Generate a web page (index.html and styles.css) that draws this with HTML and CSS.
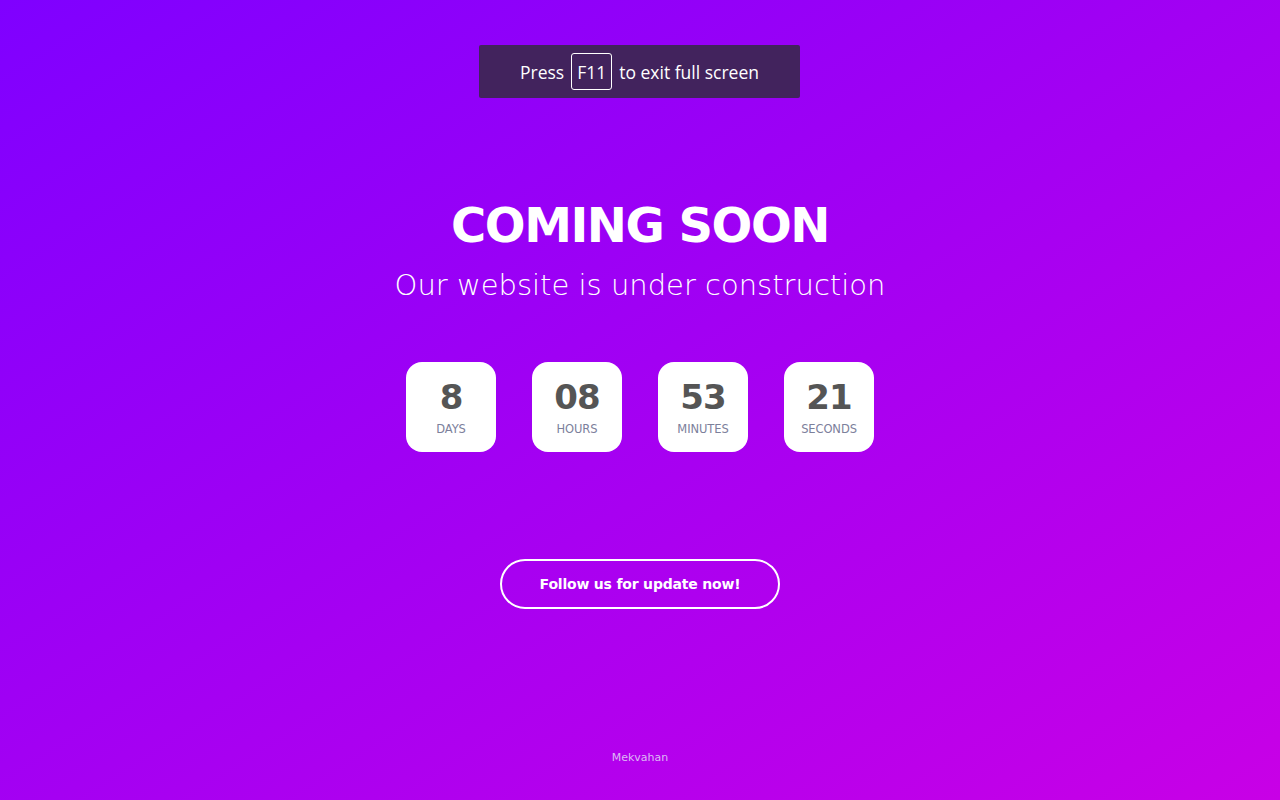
FILE: index.html
```html
<!DOCTYPE html>
<html lang="en">
<head>
<meta charset="utf-8">
<title>Coming Soon</title>
<link rel="stylesheet" href="styles.css">
</head>
<body>
<div class="page">
  <main class="content">
    <h1 class="title">COMING SOON</h1>
    <p class="subtitle">Our website is under construction</p>
    <div class="countdown">
      <div class="unit"><span class="num">8</span><span class="label">DAYS</span></div>
      <div class="unit"><span class="num">08</span><span class="label">HOURS</span></div>
      <div class="unit"><span class="num">53</span><span class="label">MINUTES</span></div>
      <div class="unit"><span class="num">21</span><span class="label">SECONDS</span></div>
    </div>
    <a class="follow" href="#">Follow us for update now!</a>
  </main>
  <footer class="footer">Mekvahan</footer>
</div>
<div class="fs-toast">Press <span class="key">F11</span> to exit full screen</div>
</body>
</html>
```
FILE: styles.css
```css
html, body {
  margin: 0;
  padding: 0;
  height: 100%;
}
body {
  background: linear-gradient(to bottom right, #7f00ff, #c800e6);
  font-family: "DejaVu Sans", "Open Sans", sans-serif;
  color: #fff;
}
.page {
  height: 100%;
  display: flex;
  flex-direction: column;
  align-items: center;
}
.content {
  flex: 1;
  display: flex;
  flex-direction: column;
  align-items: center;
  padding-top: 198px;
}
.title {
  margin: 0;
  font-size: 48px;
  line-height: 54px;
  font-weight: 800;
  letter-spacing: -1.5px;
}
.subtitle {
  margin: 13px 0 0;
  font-size: 29px;
  line-height: 40px;
  font-weight: 200;
  letter-spacing: 0;
}
.countdown {
  display: flex;
  gap: 36px;
  margin-top: 57px;
}
.unit {
  width: 90px;
  height: 90px;
  background: #fff;
  border-radius: 16px;
  display: flex;
  flex-direction: column;
  align-items: center;
  justify-content: center;
}
.num {
  font-size: 34px;
  line-height: 38px;
  font-weight: 700;
  color: #555555;
  letter-spacing: -1px;
}
.label {
  font-size: 11.5px;
  line-height: 14px;
  color: #7c809b;
  margin-top: 6px;
  letter-spacing: -0.1px;
}
.follow {
  margin-top: 107px;
  width: 276px;
  height: 46px;
  border: 2px solid #fff;
  border-radius: 26px;
  display: flex;
  align-items: center;
  justify-content: center;
  color: #fff;
  text-decoration: none;
  font-weight: 700;
  font-size: 14px;
  letter-spacing: -0.2px;
}
.footer {
  font-size: 11px;
  color: #dcb8f5;
  padding-bottom: 36px;
}
.fs-toast {
  position: absolute;
  top: 45px;
  left: 479px;
  width: 321px;
  height: 53px;
  box-sizing: border-box;
  background: #42235d;
  border-radius: 2px;
  display: flex;
  align-items: center;
  justify-content: center;
  gap: 7px;
  font-family: "Open Sans", "DejaVu Sans", sans-serif;
  font-size: 17.5px;
  color: #fff;
}
.key {
  border: 1px solid #fff;
  border-radius: 3px;
  padding: 0 5px;
  height: 37px;
  box-sizing: border-box;
  display: flex;
  align-items: center;
}
```
